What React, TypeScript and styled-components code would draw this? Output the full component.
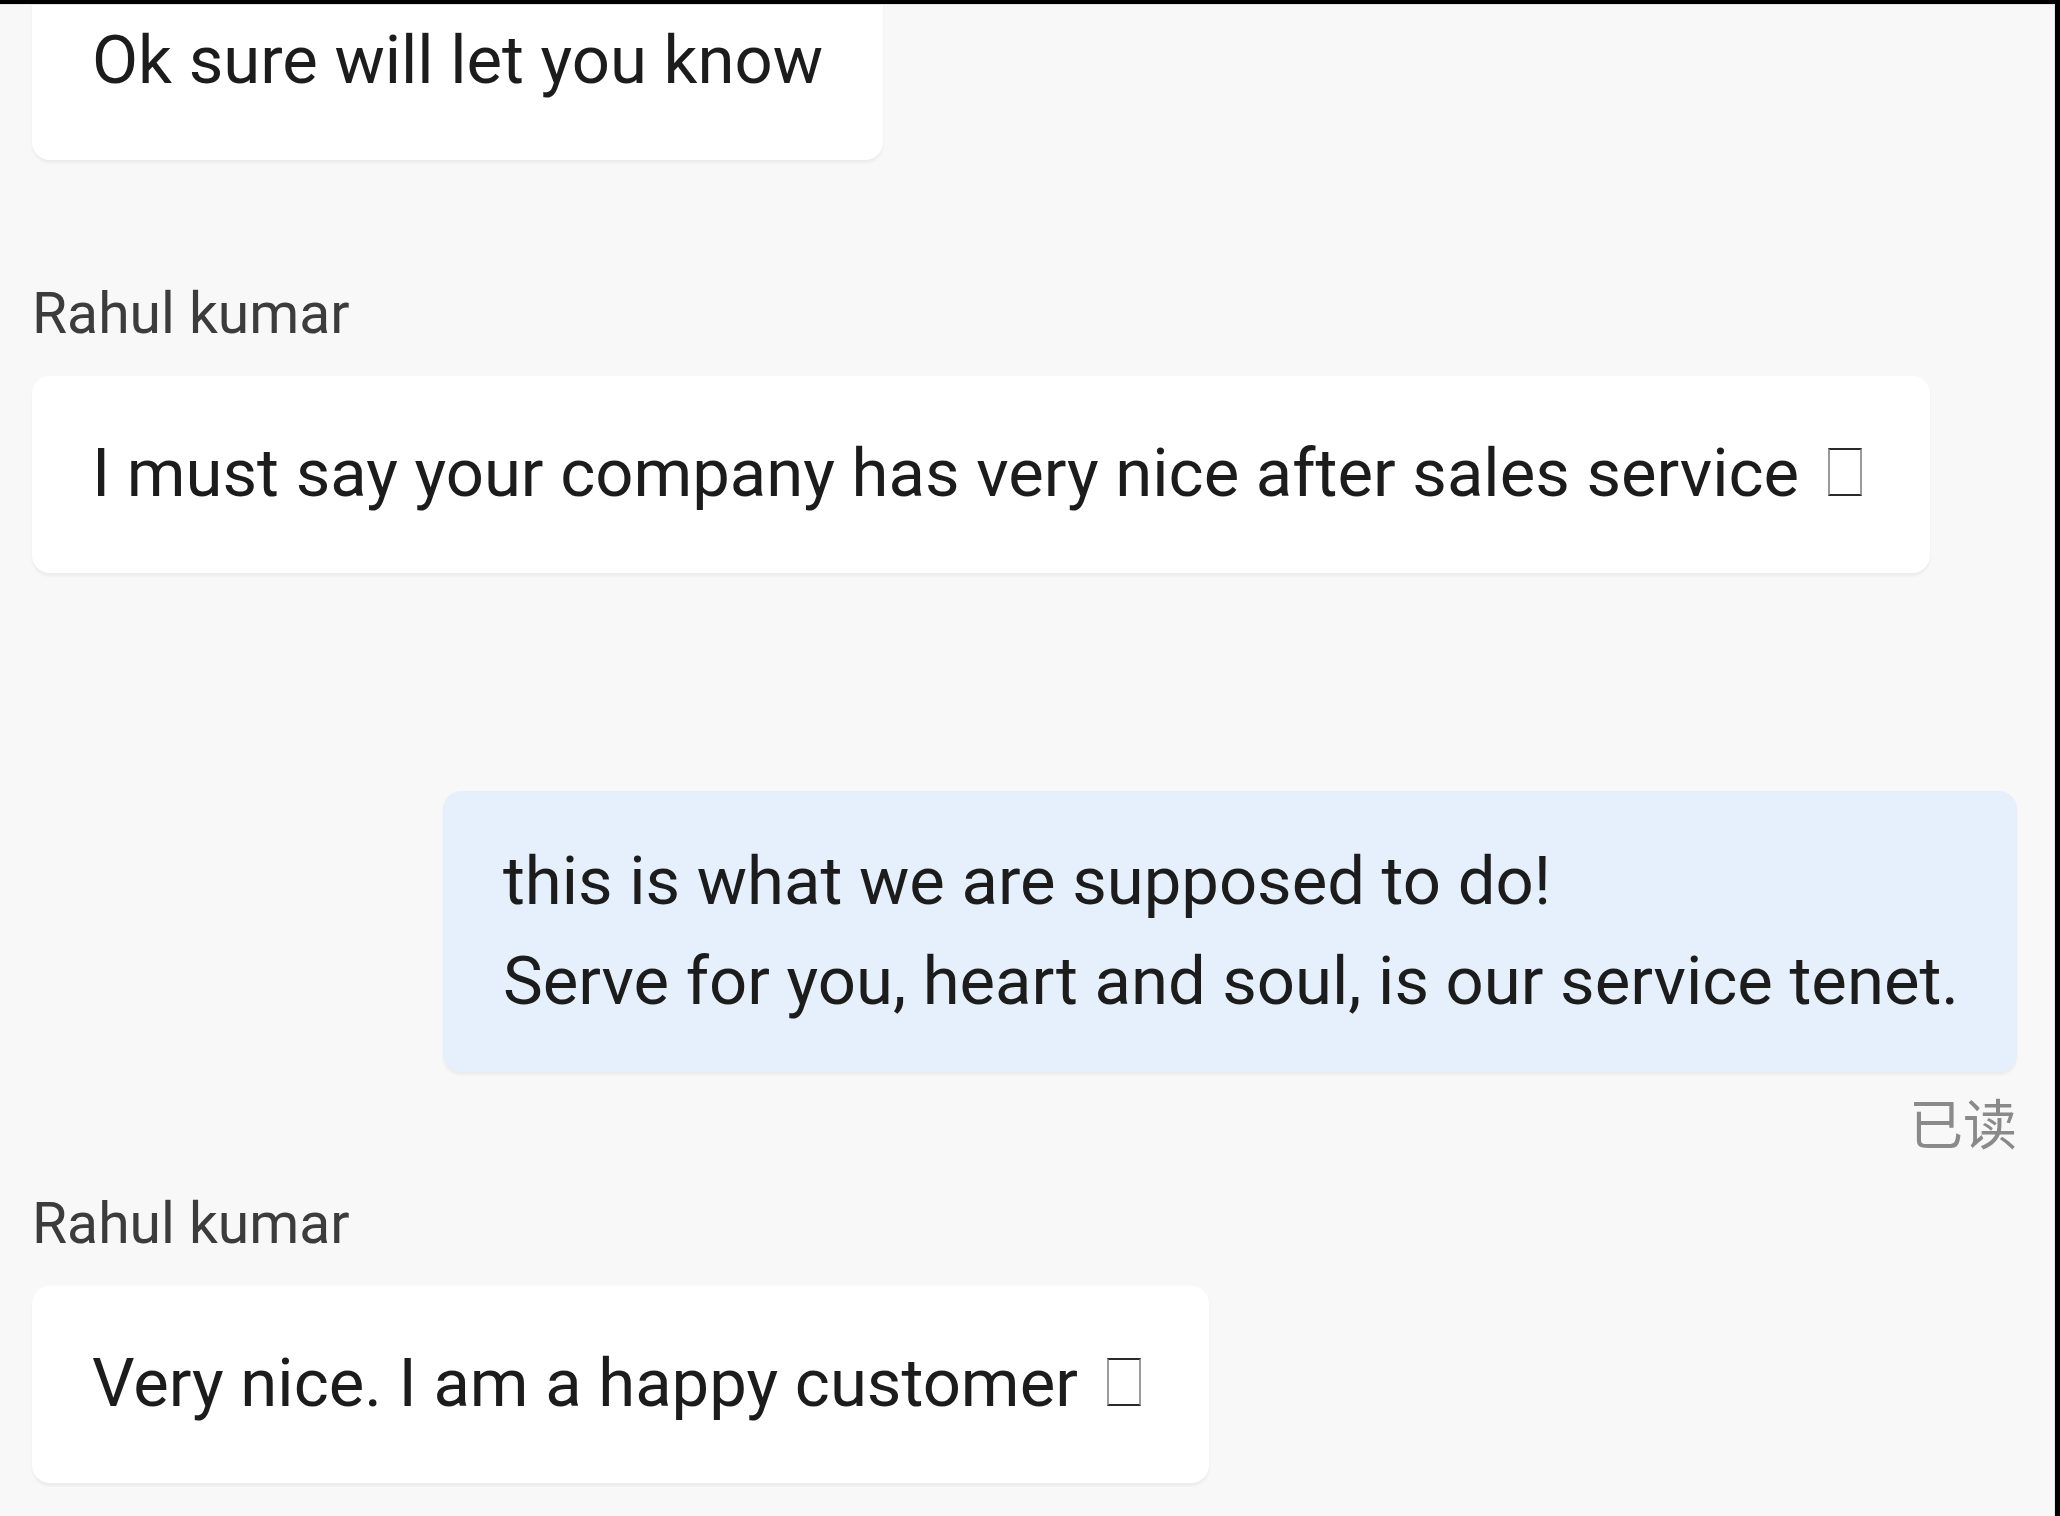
import React from "react";
import styled, { createGlobalStyle } from "styled-components";

const GlobalStyle = createGlobalStyle`
  html, body {
    margin: 0;
    padding: 0;
    background: #000000;
  }
  body {
    font-family: Roboto, "Noto Sans", "Noto Sans CJK SC", sans-serif;
    -webkit-font-smoothing: antialiased;
  }
`;

const Screen = styled.div`
  width: 2060px;
  height: 1516px;
  box-sizing: border-box;
  border-top: 4px solid #000000;
  border-right: 5px solid #000000;
  background: #f8f8f8;
  overflow: hidden;
`;

const Viewport = styled.div`
  height: 100%;
  box-sizing: border-box;
  overflow: hidden;
  border-top: 1px solid #e2e2e2;
  border-right: 1px solid #e2e2e2;
  padding: 0 37px 0 32px;
`;

const Thread = styled.div<{ $scroll: number }>`
  display: flex;
  flex-direction: column;
  margin-top: ${(p) => -p.$scroll}px;
`;

const Group = styled.div<{ $mine?: boolean; $space: number }>`
  display: flex;
  flex-direction: column;
  align-items: ${(p) => (p.$mine ? "flex-end" : "flex-start")};
  margin-top: ${(p) => p.$space}px;
`;

const Sender = styled.div`
  font-family: Roboto, "Noto Sans", sans-serif;
  font-size: 57px;
  line-height: 56px;
  color: #3c3c3c;
  margin-bottom: 34px;
  white-space: nowrap;
`;

const Bubble = styled.div<{ $mine?: boolean }>`
  box-sizing: border-box;
  background: ${(p) => (p.$mine ? "#e6f0fc" : "#ffffff")};
  border-radius: 18px;
  box-shadow: 0 3px 3px rgba(0, 0, 0, 0.05);
  padding: ${(p) => (p.$mine ? "40px 58px 41px 60px" : "47px 60px 50px 60px")};
  font-family: Roboto, "Noto Sans", sans-serif;
  font-size: 67px;
  line-height: 100px;
  color: #1c1c1c;
  white-space: nowrap;
`;

const Line = styled.div``;

const Tofu = styled.span`
  display: inline-block;
  box-sizing: border-box;
  width: 34px;
  height: 48px;
  margin-left: 29px;
  margin-right: 8px;
  border: 2px solid #9a9a9a;
  border-top-color: #2a2a2a;
  border-bottom-color: #2a2a2a;
  vertical-align: baseline;
`;

const Receipt = styled.div`
  margin-top: 23px;
  font-family: "Noto Sans CJK SC", "Noto Sans CJK JP", sans-serif;
  font-size: 54px;
  line-height: 54px;
  color: #8a8a8a;
`;

type Msg = {
  id: number;
  mine?: boolean;
  sender?: string;
  lines: string[];
  tofu?: boolean;
  read?: boolean;
  space: number;
};

const messages: Msg[] = [
  { id: 1, lines: ["Ok sure will let you know"], space: 0 },
  {
    id: 2,
    sender: "Rahul kumar",
    lines: ["I must say your company has very nice after sales service"],
    tofu: true,
    space: 126,
  },
  {
    id: 3,
    mine: true,
    lines: [
      "this is what we are supposed to do!",
      "Serve for you, heart and soul, is our service tenet.",
    ],
    read: true,
    space: 218,
  },
  {
    id: 4,
    sender: "Rahul kumar",
    lines: ["Very nice. I am a happy customer"],
    tofu: true,
    space: 47,
  },
];

export default function App() {
  return (
    <>
      <GlobalStyle />
      <Screen>
        <Viewport>
          <Thread $scroll={42}>
            {messages.map((m) => (
              <Group key={m.id} $mine={m.mine} $space={m.space}>
                {m.sender && <Sender>{m.sender}</Sender>}
                <Bubble $mine={m.mine}>
                  {m.lines.map((l, i) => (
                    <Line key={i}>
                      {l}
                      {m.tofu && i === m.lines.length - 1 && <Tofu aria-hidden />}
                    </Line>
                  ))}
                </Bubble>
                {m.read && <Receipt>已读</Receipt>}
              </Group>
            ))}
          </Thread>
        </Viewport>
      </Screen>
    </>
  );
}
